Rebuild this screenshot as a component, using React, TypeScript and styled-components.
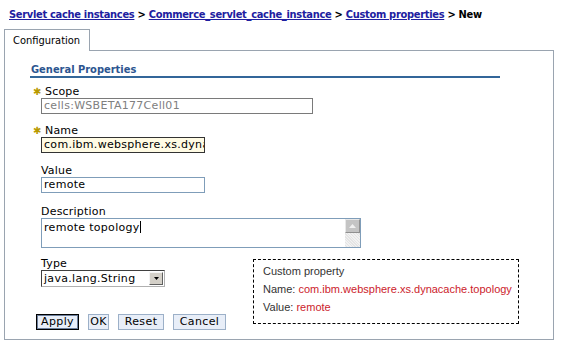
import React from 'react'
import styled, { createGlobalStyle } from 'styled-components'

const GlobalStyle = createGlobalStyle`
body {
  margin: 0;
  background: #fff;
  font-family: "DejaVu Sans", Verdana, sans-serif;
  font-size: 11px;
  color: #000;
}
`

const Page = styled.div`
width: 562px;
height: 351px;
overflow: hidden;
padding-top: 8px;
box-sizing: border-box;
`

const Crumbs = styled.div`
padding-left: 9px;
height: 13px;
line-height: 13px;
font-family: "DejaVu Sans Condensed", "DejaVu Sans", sans-serif;
font-weight: bold;
font-size: 11px;
letter-spacing: -0.3px;
white-space: nowrap;
a {
  color: #2020a0;
  text-decoration: underline;
}
`

const TabBar = styled.div`
display: flex;
width: 550px;
margin: 8px 0 0 4px;
height: 22px;
`

const Tab = styled.div`
width: 86px;
box-sizing: border-box;
border: 1px solid #9aa4b0;
border-bottom: none;
display: flex;
align-items: center;
padding-left: 8px;
font-family: "DejaVu Sans Condensed", "DejaVu Sans", sans-serif;
font-size: 11px;
`

const TabFill = styled.div`
flex: 1;
border-bottom: 1px solid #9aa4b0;
`

const Panel = styled.div`
width: 550px;
height: 289px;
margin-left: 4px;
box-sizing: border-box;
border: 1px solid #9aa4b0;
border-top: none;
padding: 12px 0 0 25px;
`

const Heading = styled.div`
width: 470px;
padding: 0 0 0 1px;
box-sizing: border-box;
height: 15px;
line-height: 13px;
border-bottom: 2px solid #336699;
color: #2c5590;
font-family: "DejaVu Sans Condensed", "DejaVu Sans", sans-serif;
font-weight: bold;
font-size: 11px;
`

const Form = styled.div`
margin: 8px 0 0 11px;
display: flex;
flex-direction: column;
`

const Field = styled.div<{ $gap: number }>`
display: flex;
flex-direction: column;
margin-bottom: ${p => p.$gap}px;
`

const Label = styled.div`
height: 12px;
line-height: 12px;
font-size: 11px;
letter-spacing: 0.2px;
white-space: nowrap;
`

const Star = styled.span`
display: inline-block;
width: 12px;
margin-left: -8px;
color: #b89a00;
font-weight: bold;
font-size: 10px;
`

const Input = styled.div<{ $w: number; $tone?: 'disabled' | 'focus' | 'plain' }>`
width: ${p => p.$w}px;
height: 16px;
box-sizing: border-box;
line-height: 14px;
padding-left: 2px;
overflow: hidden;
white-space: nowrap;
font-size: 11px;
letter-spacing: 0.3px;
border: 1px solid ${p => p.$tone === 'disabled' ? '#7a7a7a' : p.$tone === 'focus' ? '#333' : '#7f9db9'};
background: ${p => p.$tone === 'focus' ? '#fffbe4' : '#fff'};
color: ${p => p.$tone === 'disabled' ? '#808080' : '#000'};
`

const TextArea = styled.div`
width: 320px;
height: 30px;
box-sizing: border-box;
border: 1px solid #7f9db9;
display: flex;
`

const AreaText = styled.div`
flex: 1;
padding: 2px 0 0 2px;
line-height: 13px;
letter-spacing: 0.3px;
`

const Caret = styled.span`
display: inline-block;
width: 1px;
height: 12px;
background: #000;
vertical-align: -2px;
`

const ScrollBar = styled.div`
width: 15px;
display: flex;
flex-direction: column;
background: repeating-linear-gradient(45deg, #f2f2f2 0 1px, #e4e4e4 1px 2px);
`

const ScrollBtn = styled.div`
height: 14px;
background: #c4c4c4;
border: 1px solid #e8e8e8;
border-right-color: #909090;
border-bottom-color: #909090;
box-sizing: border-box;
display: flex;
align-items: center;
justify-content: center;
`

const Bottom = styled.div`
display: flex;
align-items: flex-start;
`

const LeftCol = styled.div`
width: 212px;
display: flex;
flex-direction: column;
`

const Select = styled.div`
width: 124px;
height: 17px;
box-sizing: border-box;
border: 1px solid #404040;
border-right-color: #b0b0b0;
border-bottom-color: #b0b0b0;
display: flex;
align-items: center;
padding: 0 1px 0 2px;
letter-spacing: 0.3px;
`

const SelectText = styled.div`
flex: 1;
`

const SelectBtn = styled.div`
width: 14px;
height: 13px;
box-sizing: border-box;
background: #d4d0c8;
border: 1px solid #f4f4f4;
border-right-color: #606060;
border-bottom-color: #606060;
display: flex;
align-items: center;
justify-content: center;
`

const Buttons = styled.div`
display: flex;
gap: 9px;
margin: 27px 0 0 -5px;
`

const Button = styled.button<{ $primary?: boolean; $w: number }>`
width: ${p => p.$w}px;
height: 16px;
box-sizing: border-box;
padding: 0;
font-family: "DejaVu Sans", Verdana, sans-serif;
font-size: 11px;
letter-spacing: 0.4px;
line-height: 12px;
text-align: center;
background: #e8eef8;
color: #000;
border: 1px solid ${p => p.$primary ? '#000' : '#9cb0c8'};
box-shadow: ${p => p.$primary ? 'inset 0 0 0 1px #6c7f9c' : 'none'};
`

const InfoBox = styled.div`
width: 266px;
height: 65px;
box-sizing: border-box;
margin-top: 1px;
border: 1px dashed #000;
padding: 2px 0 0 9px;
font-family: "Liberation Sans", Arial, sans-serif;
font-size: 11px;
line-height: 18px;
color: #333;
`

const Red = styled.span`
color: #cc1c2c;
`

export default function App() {
  return (
    <Page>
      <GlobalStyle />
      <Crumbs>
        <a>Servlet cache instances</a> &gt; <a>Commerce_servlet_cache_instance</a> &gt; <a>Custom properties</a> &gt; New
      </Crumbs>
      <TabBar>
        <Tab>Configuration</Tab>
        <TabFill />
      </TabBar>
      <Panel>
        <Heading>General Properties</Heading>
        <Form>
          <Field $gap={11}>
            <Label><Star>✱</Star>Scope</Label>
            <Input $w={272} $tone="disabled">cells:WSBETA177Cell01</Input>
          </Field>
          <Field $gap={12}>
            <Label><Star>✱</Star>Name</Label>
            <Input $w={164} $tone="focus">com.ibm.websphere.xs.dynacache.topology</Input>
          </Field>
          <Field $gap={13}>
            <Label>Value</Label>
            <Input $w={164}>remote</Input>
          </Field>
          <Field $gap={10}>
            <Label>Description</Label>
            <TextArea>
              <AreaText>remote topology<Caret /></AreaText>
              <ScrollBar>
                <ScrollBtn>
                  <svg width="7" height="4" viewBox="0 0 7 4"><path d="M0 4 L3.5 0 L7 4 Z" fill="#f0f0f0" /></svg>
                </ScrollBtn>
              </ScrollBar>
            </TextArea>
          </Field>
          <Bottom>
            <LeftCol>
              <Label>Type</Label>
              <Select>
                <SelectText>java.lang.String</SelectText>
                <SelectBtn>
                  <svg width="5" height="3" viewBox="0 0 5 3"><path d="M0 0 L5 0 L2.5 3 Z" fill="#000" /></svg>
                </SelectBtn>
              </Select>
              <Buttons>
                <Button $primary $w={43}>Apply</Button>
                <Button $w={21}>OK</Button>
                <Button $w={46}>Reset</Button>
                <Button $w={53}>Cancel</Button>
              </Buttons>
            </LeftCol>
            <InfoBox>
              <div>Custom property</div>
              <div>Name: <Red>com.ibm.websphere.xs.dynacache.topology</Red></div>
              <div>Value: <Red>remote</Red></div>
            </InfoBox>
          </Bottom>
        </Form>
      </Panel>
    </Page>
  )
}
